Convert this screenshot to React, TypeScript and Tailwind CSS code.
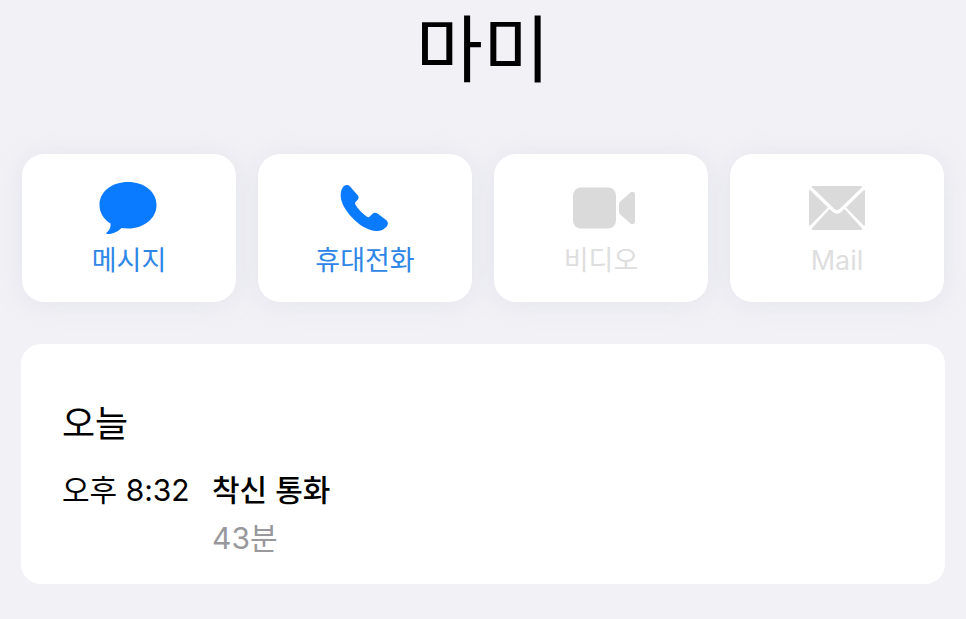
const FONT = "font-['Inter','Noto_Sans_CJK_KR',sans-serif]"

function MessageIcon() {
  return (
    <svg width="60" height="54" viewBox="0 0 60 54" fill="#0a7aff" className="mr-[2px]">
      <path d="M30 1C14 1 1.500 10.500 1.500 24C1.500 32 6 38.500 12.500 42.500C13 47 11 49.500 8.500 51.500C8 52.500 9 53 10.500 53C15 53 20 50.500 23.500 47C25.500 47.300 27.500 47.500 30 47.500C46 47.500 58.500 37.500 58.500 24C58.500 10.500 46 1 30 1Z" />
    </svg>
  )
}

function PhoneIcon() {
  return (
    <svg width="48" height="48" viewBox="0 0 48 48" fill="#0a7aff" className="mr-[2px]">
      <path d="M3.500 2.500C5.500 0.500 8 0.500 9.800 2.300L17.500 11C19 12.800 19 14.500 17.500 16L15.500 18C14.800 18.800 14.800 19.500 15.200 20.300C18 25 22 29.500 27 32.800C28 33.400 29 33.300 29.800 32.600L32.300 30C34 28.600 36 28.500 37.800 29.700L45.800 35.700C48.300 37.700 48.500 40.500 46.500 42.800C43.500 46 40 47.500 35.500 47C27 46 19 41 12.500 34C6 27 1.500 20 0.800 13C0.400 9 1.200 5 3.500 2.500Z" />
    </svg>
  )
}

function VideoIcon() {
  return (
    <svg width="62" height="42" viewBox="0 0 62 42" fill="#dadada" className="ml-[6px]">
      <rect x="0" y="0.500" width="43" height="41" rx="8" />
      <path d="M46 17C46 16 46.400 15.200 47.200 14.500L57.500 5.500C59.500 4 62 5 62 8V34C62 37 59.500 38 57.500 36.500L47.200 27.500C46.400 26.800 46 26 46 25Z" />
    </svg>
  )
}

function MailIcon() {
  return (
    <svg width="58" height="46" viewBox="0 0 58 46" fill="#dadada">
      <path d="M5 1H53C54 1 54.500 1.500 54 2.300L31.500 24C29.800 25.500 28.200 25.500 26.500 24L4 2.300C3.500 1.500 4 1 5 1Z" />
      <path d="M1.500 4.500L20 22.500L1.800 41C1.200 40.500 1 39.500 1 38.500V6.500C1 5.700 1.200 5 1.500 4.500Z" />
      <path d="M56.500 4.500L38 22.500L56.200 41C56.800 40.500 57 39.500 57 38.500V6.500C57 5.700 56.800 5 56.500 4.500Z" />
      <path d="M21.500 24L24.500 26.800C27.500 29.300 30.500 29.300 33.500 26.800L36.500 24L54 43.300C54.500 44.300 54 45 53 45H5C4 45 3.500 44.300 4 43.300Z" />
    </svg>
  )
}

function ActionCard({ icon, label, color }: { icon: React.ReactNode; label: string; color: string }) {
  return (
    <div className="flex h-[148px] flex-col items-center rounded-[22px] bg-white shadow-[0_2px_24px_rgba(190,190,210,0.25)]">
      <div className="mt-[26px] flex h-[56px] items-center justify-center">{icon}</div>
      <div className={`mt-[7px] text-[27px] leading-[36px] ${color}`}>{label}</div>
    </div>
  )
}

export default function App() {
  return (
    <div className={`${FONT} h-[619px] w-[966px] overflow-hidden bg-[#f1f1f6] text-black`}>
      <div className="flex h-[154px] justify-center">
        <div className="mt-[1px] h-[98px] text-[73px] leading-[98px]">마미</div>
      </div>

      <div className="grid grid-cols-4 gap-[22px] pl-[22px] pr-[22px]">
        <ActionCard icon={<MessageIcon />} label="메시지" color="text-[#2e86e6]" />
        <ActionCard icon={<PhoneIcon />} label="휴대전화" color="text-[#2e86e6]" />
        <ActionCard icon={<VideoIcon />} label="비디오" color="text-[#dedede]" />
        <ActionCard icon={<MailIcon />} label="Mail" color="text-[#dedede]" />
      </div>

      <div className="ml-[21px] mt-[42px] h-[240px] w-[924px] rounded-[20px] bg-white pl-[41px] pt-[57px]">
        <div className="text-[36px] leading-[46px]">오늘</div>
        <div className="mt-[23px] flex text-[30px] leading-[40px]">
          <div className="w-[150px]">오후 8:32</div>
          <div>
            <div className="font-medium">착신 통화</div>
            <div className="mt-[8px] text-[#98989d]">43분</div>
          </div>
        </div>
      </div>
    </div>
  )
}
